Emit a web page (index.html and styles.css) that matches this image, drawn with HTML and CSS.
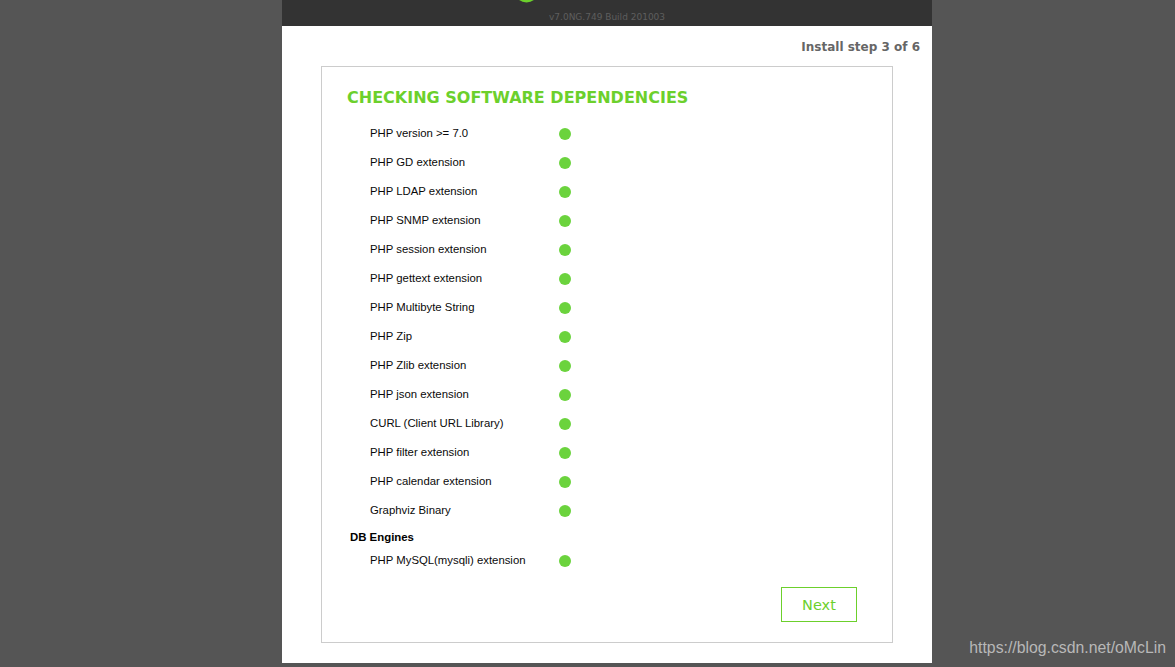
FILE: index.html
```html
<!DOCTYPE html>
<html>

<head>
    <meta charset="UTF-8">
    <title>Pandora FMS installer</title>
    <link rel="stylesheet" href="styles.css">
</head>

<body>
    <div class="page">
        <div class="header">
            <svg class="logo-arc" width="24" height="3" viewBox="0 0 24 3">
                <circle cx="11.5" cy="-9.5" r="12" fill="#6cd02c" />
            </svg>
            <div class="version">v7.0NG.749 Build 201003</div>
        </div>
        <div class="content">
            <div class="step">Install step 3 of 6</div>
            <div class="box">
                <h1>CHECKING SOFTWARE DEPENDENCIES</h1>
                <div class="dep"><span class="dep-name">PHP version &gt;= 7.0</span><span class="dot"></span></div>
                <div class="dep"><span class="dep-name">PHP GD extension</span><span class="dot"></span></div>
                <div class="dep"><span class="dep-name">PHP LDAP extension</span><span class="dot"></span></div>
                <div class="dep"><span class="dep-name">PHP SNMP extension</span><span class="dot"></span></div>
                <div class="dep"><span class="dep-name">PHP session extension</span><span class="dot"></span></div>
                <div class="dep"><span class="dep-name">PHP gettext extension</span><span class="dot"></span></div>
                <div class="dep"><span class="dep-name">PHP Multibyte String</span><span class="dot"></span></div>
                <div class="dep"><span class="dep-name">PHP Zip</span><span class="dot"></span></div>
                <div class="dep"><span class="dep-name">PHP Zlib extension</span><span class="dot"></span></div>
                <div class="dep"><span class="dep-name">PHP json extension</span><span class="dot"></span></div>
                <div class="dep"><span class="dep-name">CURL (Client URL Library)</span><span class="dot"></span></div>
                <div class="dep"><span class="dep-name">PHP filter extension</span><span class="dot"></span></div>
                <div class="dep"><span class="dep-name">PHP calendar extension</span><span class="dot"></span></div>
                <div class="dep"><span class="dep-name">Graphviz Binary</span><span class="dot"></span></div>
                <div class="section">DB Engines</div>
                <div class="dep"><span class="dep-name">PHP MySQL(mysqli) extension</span><span class="dot"></span></div>
                <div class="actions">
                    <button class="next">Next</button>
                </div>
            </div>
        </div>
    </div>
    <div class="watermark">https://blog.csdn.net/oMcLin</div>
</body>

</html>
```

FILE: styles.css
```css
html, body {
    height: 100%;
}

body {
    margin: 0;
    background: #555555;
    overflow: hidden;
    font-family: "Liberation Sans", Arial, sans-serif;
}

.page {
    width: 650px;
    height: 663px;
    margin-left: 282px;
    background: white;
}

.header {
    position: relative;
    height: 26px;
    background: #333333;
    overflow: hidden;
}

.logo-arc {
    position: absolute;
    left: 233px;
    top: 0;
}

.version {
    position: absolute;
    left: 267px;
    top: 12px;
    font-family: "DejaVu Sans", sans-serif;
    font-size: 9px;
    line-height: 11px;
    white-space: nowrap;
    color: #5e5e5e;
}

.content {
    padding: 13px 12px 0 39px;
}

.step {
    text-align: right;
    font-family: "DejaVu Sans", sans-serif;
    font-weight: bold;
    font-size: 12px;
    line-height: 17px;
    color: #666666;
}

.box {
    width: 570px;
    height: 575px;
    margin-top: 10px;
    border: 1px solid #cccccc;
}

h1 {
    margin: 21px 0 11px 25px;
    font-family: "DejaVu Sans", sans-serif;
    font-weight: bold;
    font-size: 16px;
    line-height: 20px;
    color: #6cd02c;
}

.dep {
    display: flex;
    align-items: center;
    height: 29px;
    padding-left: 48px;
    font-size: 11.35px;
    color: #0a0a0a;
}

.dep-name {
    width: 189px;
    position: relative;
    top: -1px;
}

.dot {
    width: 12px;
    height: 12px;
    border-radius: 50%;
    background: #6bd33d;
}

.section {
    margin: 5px 0 2px 28px;
    font-size: 11.4px;
    font-weight: bold;
    line-height: 14px;
    color: #000000;
}

.actions {
    display: flex;
    justify-content: flex-end;
    margin-top: 12px;
    padding-right: 35px;
}

.next {
    width: 76px;
    height: 35px;
    padding: 0;
    background: white;
    border: 1px solid #6cd02c;
    font-family: "DejaVu Sans", sans-serif;
    font-size: 14.5px;
    color: #6cd02c;
}

.watermark {
    position: absolute;
    right: 9px;
    top: 638px;
    font-size: 15.8px;
    line-height: 20px;
    color: #b8b8b8;
}
```
